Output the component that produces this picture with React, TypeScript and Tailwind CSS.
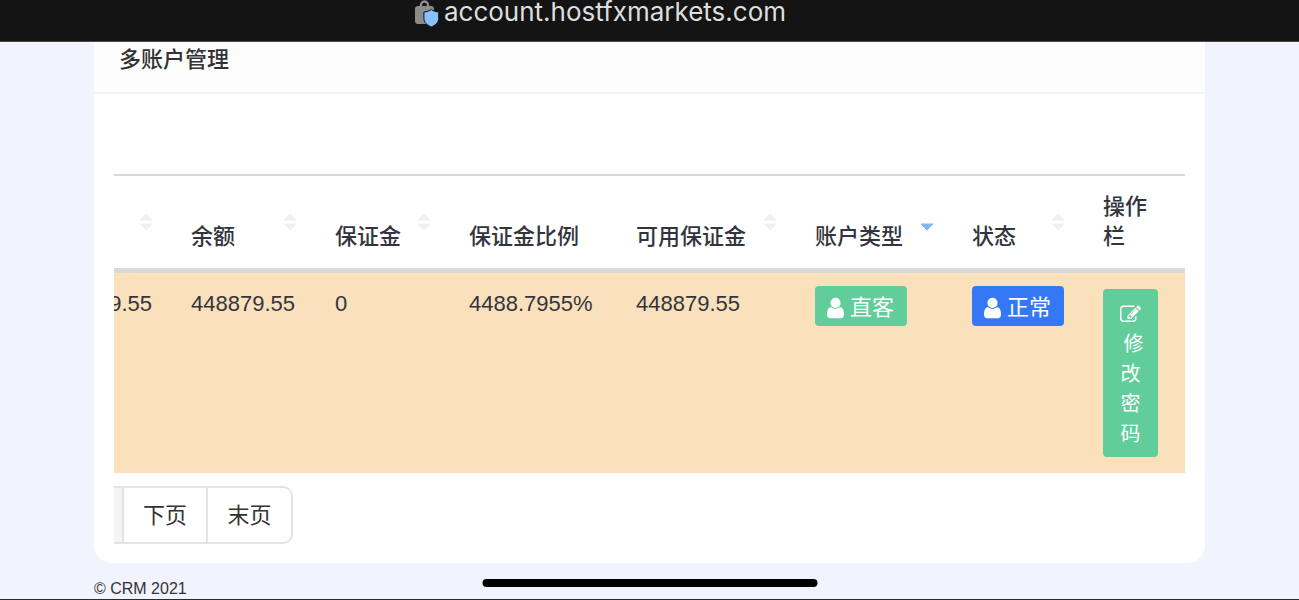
import type { ReactNode } from "react";

type Column = {
  label: string;
  width: string;
  sort?: "none" | "desc";
};

const columns: Column[] = [
  { label: "", width: "w-[58px]", sort: "none" },
  { label: "余额", width: "w-[144px]", sort: "none" },
  { label: "保证金", width: "w-[134px]", sort: "none" },
  { label: "保证金比例", width: "w-[167px]" },
  { label: "可用保证金", width: "w-[179px]", sort: "none" },
  { label: "账户类型", width: "w-[157px]", sort: "desc" },
  { label: "状态", width: "w-[131px]", sort: "none" },
  { label: "操作栏", width: "w-[102px]" },
];

const UserIcon = () => (
  <svg viewBox="0 0 1280 1792" className="h-6 w-[17px] shrink-0 fill-current" aria-hidden="true">
    <path d="M1280 1399q0 109-62.5 187t-150.5 78h-854q-88 0-150.5-78t-62.5-187q0-85 8.5-160.5t31.5-152 58.5-131 94-89 134.5-34.5q131 128 313 128t313-128q76 0 134.5 34.5t94 89 58.5 131 31.5 152 8.5 160.5zm-256-887q0 159-112.5 271.5t-271.5 112.5-271.5-112.5-112.5-271.5 112.5-271.5 271.5-112.5 271.5 112.5 112.5 271.5z" />
  </svg>
);

const EditIcon = () => (
  <svg viewBox="0 0 1792 1792" className="size-[21px] fill-current" aria-hidden="true">
    <path d="M888 1184l116-116-152-152-116 116v56h96v96h56zm440-720q-16-16-33 1l-350 350q-17 17-1 33t33-1l350-350q17-17 1-33zm80 594v190q0 119-84.5 203.5t-203.5 84.5h-832q-119 0-203.5-84.5t-84.5-203.5v-832q0-119 84.5-203.5t203.5-84.5h832q63 0 117 25 15 7 18 23 3 17-9 29l-49 49q-14 14-32 8-23-6-45-6h-832q-66 0-113 47t-47 113v832q0 66 47 113t113 47h832q66 0 113-47t47-113v-126q0-13 9-22l64-64q15-15 35-7t20 29zm-96-738l288 288-672 672h-288v-288zm444 132l-92 92-288-288 92-92q28-28 68-28t68 28l152 152q28 28 28 68t-28 68z" />
  </svg>
);

const LockShield = () => (
  <svg viewBox="0 0 24 28" className="h-7 w-6" aria-hidden="true">
    <path d="M6 8V5a3.500 3.500 0 0 1 7 0v3" fill="none" stroke="#8b8b8b" strokeWidth="2.4" />
    <rect x="0" y="6" width="19" height="18" rx="3" fill="#8b8b8b" />
    <path
      d="M16.300 9.500c2 1.500 4.500 2.300 7.400 2.500v6.500c0 4-3.200 6.600-7.400 8.500-4.200-1.900-7.400-4.500-7.400-8.500V12c2.900-.2 5.400-1 7.400-2.500z"
      fill="#87c0fa"
      stroke="#141414"
      strokeWidth="1"
      strokeLinejoin="round"
    />
  </svg>
);

const SortArrows = ({ state }: { state: "none" | "desc" }) => (
  <svg viewBox="0 0 14 18" className="h-[18px] w-[14px] shrink-0" aria-hidden="true">
    {state === "none" && <path d="M7 1L13 7H1z" fill="#f0f0f0" stroke="#f0f0f0" strokeLinejoin="round" />}
    <path
      d="M7 17L1 11h12z"
      fill={state === "desc" ? "#84b3fb" : "#f0f0f0"}
      stroke={state === "desc" ? "#84b3fb" : "#f0f0f0"}
      strokeLinejoin="round"
    />
  </svg>
);

const Badge = ({ color, children }: { color: string; children: ReactNode }) => (
  <span
    className={`inline-flex h-10 items-center gap-[6px] rounded pt-[3px] pr-[13px] pl-3 whitespace-nowrap text-white ${color}`}
  >
    <UserIcon />
    {children}
  </span>
);

const AccountTable = () => (
  <div className="overflow-hidden">
    <table className="w-full table-fixed border-collapse text-left text-[22px] leading-[30px] text-[#33353e]">
      <thead>
        <tr className="border-t-2 border-b-[5px] border-t-[#d9d9d9] border-b-[#d9d9d9]">
          {columns.map((col, i) => (
            <th key={i} className={`h-[92px] p-0 font-medium ${col.width}`}>
              <div className="flex h-[92px] items-center justify-between py-4 pr-[19px] pl-[19px]">
                <span className="self-end">{col.label}</span>
                {col.sort && (
                  <button type="button" aria-label={`${col.label}排序`} className="-ml-4 shrink-0">
                    <SortArrows state={col.sort} />
                  </button>
                )}
              </div>
            </th>
          ))}
        </tr>
      </thead>
      <tbody>
        <tr className="bg-[#fae1bc] align-top">
          <td className="py-4">
            <div className="flex justify-end overflow-hidden pr-5">9.55</div>
          </td>
          <td className="py-4 pl-[19px]">448879.55</td>
          <td className="py-4 pl-[19px]">0</td>
          <td className="py-4 pl-[19px]">4488.7955%</td>
          <td className="py-4 pl-[19px]">448879.55</td>
          <td className="py-[13px] pl-[19px]">
            <Badge color="bg-[#61cd9a]">直客</Badge>
          </td>
          <td className="py-[13px] pl-[19px]">
            <Badge color="bg-[#3578f6]">正常</Badge>
          </td>
          <td className="py-4 pl-[19px]">
            <button
              type="button"
              className="flex w-[55px] flex-col items-center rounded bg-[#61cd9a] pt-[10px] pb-2 text-xl leading-[30px] text-white"
            >
              <span className="flex h-[30px] items-center">
                <EditIcon />
              </span>
              <span className="w-5 text-left">
                <span className="ml-[3px] block w-5">修</span>
                改密码
              </span>
            </button>
          </td>
        </tr>
      </tbody>
    </table>

    {/* pagination */}
    <nav className="mt-[13px] flex h-[58px] text-[22px] text-[#333333]">
      <button type="button" disabled aria-label="上页" className="w-2 border-y-2 border-[#e1e3e9] bg-[#f4f4f4]" />
      <button type="button" className="w-[86px] border-2 border-[#e1e3e9] bg-white">
        下页
      </button>
      <button type="button" className="w-[85px] rounded-r-[10px] border-2 border-l-0 border-[#e1e3e9] bg-white">
        末页
      </button>
    </nav>
  </div>
);

const App = () => {
  return (
    <div className="relative flex min-h-screen flex-col border-b border-[#2b2b2e] bg-[#f1f4fe] font-['Liberation_Sans','Noto_Sans_CJK_SC',sans-serif]">
      {/* browser bar */}
      <header className="flex h-[42px] justify-center gap-[5px] border-b border-[#4a4a4a] bg-[#141414] pr-[98px]">
        <LockShield />
        <span className="font-['Inter',sans-serif] text-[26px] leading-6 text-[#dedede]">
          account.hostfxmarkets.com
        </span>
      </header>

      <main className="mx-[94px] overflow-hidden rounded-b-[18px] bg-white">
        <h1 className="border-b-2 border-[#f1f3fd] bg-[#fdfdfd] pt-[2px] pr-6 pb-4 pl-[25px] text-[22px] leading-8 font-medium text-[#333333]">
          多账户管理
        </h1>
        <section className="px-5 pt-20 pb-[19px]">
          <AccountTable />
        </section>
      </main>

      <footer className="mx-[94px] pt-4 text-base leading-5 text-[#333333]">© CRM 2021</footer>

      {/* home indicator */}
      <div className="absolute bottom-3 left-1/2 h-2 w-[335px] -translate-x-1/2 rounded-full bg-black" />
    </div>
  );
};

export default App;
